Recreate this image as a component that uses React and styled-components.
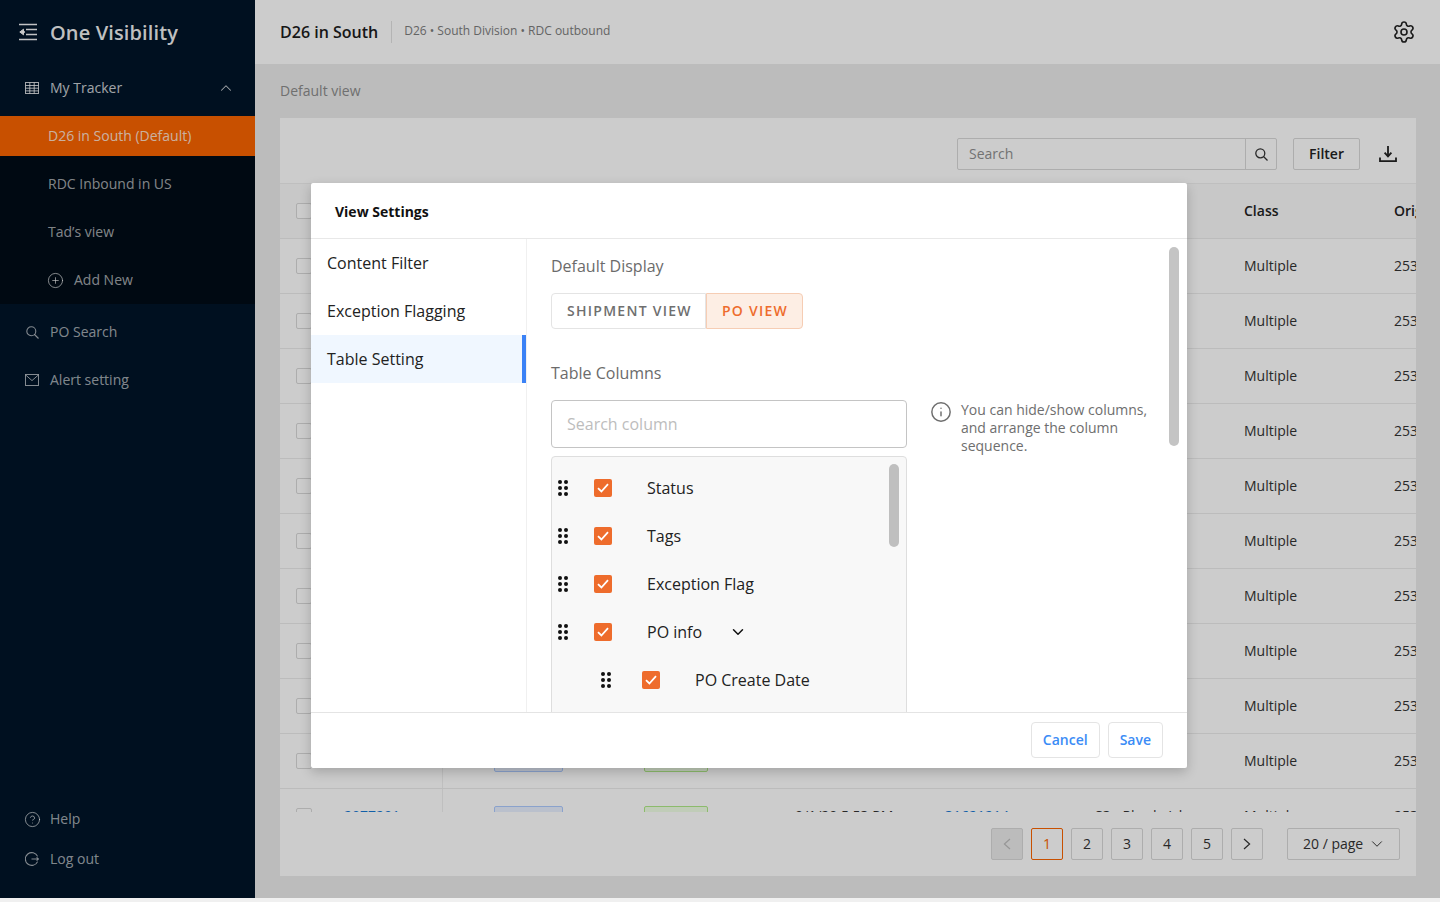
import React from "react";
import styled, { createGlobalStyle } from "styled-components";
import { CircleHelp, Settings, Info, ChevronUp, ChevronDown, CirclePlus } from "lucide-react";

const GlobalStyle = createGlobalStyle`
  html, body { margin: 0; padding: 0; background: #f0f0f0; height: 100%; overflow: hidden; }
  * { box-sizing: border-box; }
  body { font-family: "Open Sans", "Liberation Sans", sans-serif; }
`;

const Page = styled.div`
  position: relative;
  display: flex;
  width: 1440px;
  height: 898px;
  overflow: hidden;
`;

const Sidebar = styled.aside`
  width: 255px;
  flex: none;
  display: flex;
  flex-direction: column;
  background: #001529;
  color: rgba(255, 255, 255, 0.65);
`;

const Brand = styled.div`
  height: 64px;
  display: flex;
  align-items: center;
  gap: 12px;
  padding-left: 18px;
  font-size: 20px;
  font-weight: 600;
  letter-spacing: 0.12px;
  color: rgba(255, 255, 255, 0.95);
`;

const NavRow = styled.div`
  height: 48px;
  display: flex;
  align-items: center;
  gap: 11px;
  padding: 0 20px 0 25px;
  font-size: 14px;
  color: ${(p) => (p.$bright ? "rgba(255,255,255,.8)" : "inherit")};
`;

const NavIcon = styled.span`
  width: ${(p) => p.$w || 14}px;
  flex: none;
  display: flex;
  justify-content: center;
  svg { flex: none; }
`;

const NavLabel = styled.span`
  padding-bottom: 2px;
`;

const RowEnd = styled.span`
  margin-left: auto;
  display: flex;
`;

const SubMenu = styled.div`
  margin: 4px 0;
  background: #000c17;
  padding-bottom: 4px;
`;

const SubItem = styled.div`
  height: 40px;
  margin-bottom: 8px;
  display: flex;
  align-items: center;
  gap: 11px;
  padding-left: 48px;
  font-size: 14px;
  background: ${(p) => (p.$active ? "#fa6400" : "transparent")};
  color: ${(p) => (p.$active ? "rgba(255,255,255,.8)" : "inherit")};
  &:last-child { margin-bottom: 0; }
`;

const SidebarBottom = styled.div`
  margin-top: auto;
  padding-bottom: 19px;
  ${NavRow} { height: 40px; }
`;

const Main = styled.main`
  flex: 1;
  min-width: 0;
  display: flex;
  flex-direction: column;
  background: #ebebeb;
`;

const Header = styled.header`
  height: 64px;
  flex: none;
  display: flex;
  align-items: center;
  padding: 0 24px 0 25px;
  background: #fff;
`;

const PageTitle = styled.h1`
  margin: 0;
  font-size: 16px;
  font-weight: 600;
  color: #1c1c1c;
`;

const Crumbs = styled.div`
  margin-left: 13px;
  padding: 0 0 2px 12px;
  border-left: 1px solid #e2e2e2;
  font-size: 12px;
  line-height: 20px;
  color: #7d7d7d;
`;

const HeaderIcon = styled.span`
  margin-left: auto;
  display: flex;
  color: #222;
`;

const ViewLabel = styled.div`
  height: 54px;
  flex: none;
  padding: 16px 25px 0;
  font-size: 14px;
  line-height: 22px;
  color: #8c8c8c;
`;

const Panel = styled.section`
  margin: 0 24px 22px 25px;
  flex: 1;
  min-height: 0;
  display: flex;
  flex-direction: column;
  background: #fff;
`;

const Toolbar = styled.div`
  height: 66px;
  flex: none;
  display: flex;
  align-items: flex-start;
  justify-content: flex-end;
  padding: 20px 19px 0 0;
  border-bottom: 1px solid #efefef;
`;

const SearchBox = styled.div`
  width: 320px;
  height: 32px;
  display: flex;
  border: 1px solid #d9d9d9;
  border-radius: 2px;
`;

const SearchText = styled.div`
  flex: 1;
  padding-left: 11px;
  font-size: 14px;
  line-height: 30px;
  color: #8f8f8f;
`;

const SearchAddon = styled.div`
  width: 31px;
  display: flex;
  align-items: center;
  justify-content: center;
  border-left: 1px solid #d9d9d9;
  color: #333;
`;

const FilterButton = styled.div`
  width: 67px;
  height: 32px;
  margin-left: 16px;
  border: 1px solid #d9d9d9;
  border-radius: 2px;
  text-align: center;
  font-size: 14px;
  font-weight: 600;
  line-height: 30px;
  color: #222;
`;

const DownloadIcon = styled.span`
  margin-left: 19px;
  display: flex;
  align-items: center;
  height: 32px;
  color: #222;
`;

const TableWrap = styled.div`
  height: 628px;
  flex: none;
  overflow: hidden;
`;

const Row = styled.div`
  display: grid;
  grid-template-columns: 64px 99px 201px 151px 150px 150px 149px 150px 22px;
  height: 55px;
  align-items: stretch;
  border-bottom: 1px solid #ececec;
  background: ${(p) => (p.$head ? "#fafafa" : "#fff")};
  font-size: 14px;
  font-weight: ${(p) => (p.$head ? 600 : 400)};
  color: ${(p) => (p.$head ? "#222" : "#333")};
`;

const Cell = styled.div`
  display: flex;
  align-items: center;
  padding-bottom: 2px;
  white-space: nowrap;
  overflow: hidden;
  color: ${(p) => (p.$link ? "#1677d2" : "inherit")};
`;

const CheckCell = styled(Cell)`
  padding: 0 0 0 16px;
`;

const IdCell = styled(Cell)`
  border-right: 1px solid #efefef;
  color: #1677d2;
`;

const TagCell = styled(Cell)`
  padding: 0 0 0 ${(p) => p.$pad || 0}px;
`;

const HeadLabel = styled(Cell)`
  padding-left: ${(p) => p.$pad || 0}px;
`;

const RowBox = styled.span`
  width: 16px;
  height: 16px;
  border: 1px solid #d9d9d9;
  border-radius: 2px;
  background: #fff;
`;

const Tag = styled.span`
  height: 21px;
  width: ${(p) => p.$w}px;
  border: 1px solid ${(p) => p.$line};
  border-radius: 2px;
  background: ${(p) => p.$fill};
`;

const Pagination = styled.nav`
  flex: 1;
  display: flex;
  justify-content: flex-end;
  align-items: flex-start;
  gap: 8px;
  padding: 16px 16px 0 0;
`;

const PageBtn = styled.div`
  width: 32px;
  height: 32px;
  display: flex;
  align-items: center;
  justify-content: center;
  padding-bottom: 1px;
  border: 1px solid ${(p) => (p.$active ? "#fa6400" : "#d9d9d9")};
  border-radius: 2px;
  background: ${(p) => (p.$disabled ? "#ebebeb" : "transparent")};
  color: ${(p) => (p.$active ? "#fa6400" : p.$disabled ? "#bdbdbd" : "#333")};
  font-size: 14px;
`;

const PageSize = styled.div`
  width: 113px;
  height: 32px;
  margin-left: 16px;
  display: flex;
  align-items: center;
  gap: 5px;
  padding: 0 0 1px 15px;
  border: 1px solid #d9d9d9;
  border-radius: 2px;
  font-size: 14px;
  color: #333;
`;

const Overlay = styled.div`
  position: absolute;
  inset: 0;
  background: rgba(0, 0, 0, 0.2);
`;

const Modal = styled.div`
  position: absolute;
  left: 311px;
  top: 183px;
  width: 876px;
  height: 585px;
  display: flex;
  flex-direction: column;
  background: #fff;
  border-radius: 2px;
  box-shadow: 0 4px 12px rgba(0, 0, 0, 0.2);
`;

const ModalTitle = styled.div`
  height: 56px;
  flex: none;
  display: flex;
  align-items: center;
  padding: 1px 24px 0;
  border-bottom: 1px solid #e8e8e8;
  font-size: 14px;
  font-weight: 700;
  color: #111;
`;

const ModalBody = styled.div`
  flex: 1;
  min-height: 0;
  display: flex;
`;

const Tabs = styled.div`
  width: 216px;
  flex: none;
  border-right: 1px solid #f0f0f0;
`;

const TabItem = styled.div`
  height: 48px;
  width: 215px;
  padding-left: 16px;
  font-size: 16px;
  line-height: 48px;
  color: #222;
  background: ${(p) => (p.$active ? "#f0f7ff" : "transparent")};
  border-right: 4px solid ${(p) => (p.$active ? "#3b82f6" : "transparent")};
`;

const Content = styled.div`
  position: relative;
  flex: 1;
  overflow: hidden;
  padding: 16px 0 0 24px;
`;

const SectionLabel = styled.div`
  font-size: 16px;
  line-height: 22px;
  color: #6b6b6b;
`;

const Toggle = styled.div`
  display: flex;
  margin: 16px 0 33px;
`;

const ToggleBtn = styled.div`
  height: 36px;
  padding: 0 ${(p) => (p.$on ? 14 : 13)}px 0 15px;
  font-size: 14px;
  font-weight: 600;
  letter-spacing: 1.27px;
  line-height: 34px;
  border: 1px solid ${(p) => (p.$on ? "#f6cdb4" : "#e4e4e4")};
  border-radius: ${(p) => (p.$on ? "0 4px 4px 0" : "4px 0 0 4px")};
  background: ${(p) => (p.$on ? "#fdeee4" : "#fff")};
  color: ${(p) => (p.$on ? "#ee6c2c" : "#6f6f6f")};
`;

const ColumnsLayout = styled.div`
  display: flex;
  margin-top: 16px;
`;

const ColumnsLeft = styled.div`
  width: 356px;
  flex: none;
`;

const ColumnSearch = styled.div`
  height: 48px;
  padding-left: 15px;
  border: 1px solid #c4c4c4;
  border-radius: 4px;
  font-size: 16px;
  line-height: 46px;
  color: #bdbdbd;
`;

const ColumnList = styled.div`
  position: relative;
  height: 420px;
  margin-top: 8px;
  padding-top: 7px;
  background: #f8f8f8;
  border: 1px solid #dedede;
  border-radius: 4px;
`;

const ColumnRow = styled.div`
  height: 48px;
  display: flex;
  align-items: center;
  padding-left: ${(p) => (p.$nested ? 49 : 6)}px;
  font-size: 16px;
  color: #222;
`;

const Grip = styled.span`
  display: grid;
  grid-template-columns: 4px 4px;
  gap: 2px;
  margin-right: ${(p) => (p.$nested ? 31 : 26)}px;
  i {
    width: 4px;
    height: 4px;
    border-radius: 50%;
    background: #111;
  }
`;

const Check = styled.span`
  width: 18px;
  height: 18px;
  flex: none;
  display: flex;
  align-items: center;
  justify-content: center;
  margin-right: 35px;
  border-radius: 2px;
  background: #ee6c2c;
`;

const Expand = styled.span`
  display: flex;
  margin-left: 27px;
  color: #111;
`;

const Hint = styled.div`
  display: flex;
  gap: 9px;
  margin-left: 23px;
  width: 225px;
  color: #6e6e6e;
  font-size: 14px;
  line-height: 18px;
  svg { flex: none; margin-top: 1px; }
`;

const HintText = styled.div`
  padding-top: 1px;
  white-space: nowrap;
`;

const Thumb = styled.div`
  position: absolute;
  width: 10px;
  border-radius: 5px;
  background: ${(p) => p.$color};
  top: ${(p) => p.$top}px;
  right: ${(p) => p.$right}px;
  height: ${(p) => p.$h}px;
`;

const ModalFooter = styled.div`
  height: 56px;
  flex: none;
  display: flex;
  justify-content: flex-end;
  gap: 8px;
  padding: 9px 24px 0 0;
  border-top: 1px solid #e4e4e4;
`;

const FooterBtn = styled.div`
  height: 36px;
  padding: 0 11px;
  border: 1px solid #e4e4e4;
  border-radius: 4px;
  font-size: 14px;
  font-weight: 600;
  line-height: 34px;
  color: #3b8cf6;
`;

const MenuLogo = () => (
  <svg width="20" height="18" viewBox="0 0 20 18" fill="none" stroke="currentColor" strokeWidth="1.6">
    <path d="M1 1.5h18M8 6.5h11M8 11.5h11M1 16.5h18" />
    <path d="M5.5 6.2L1.8 9l3.7 2.8z" fill="currentColor" strokeWidth="1" />
    <path d="M4 9h3" />
  </svg>
);

const GridIcon = () => (
  <svg width="14" height="12" viewBox="0 0 14 12" fill="none" stroke="currentColor" strokeWidth="1">
    <rect x="0.5" y="0.5" width="13" height="11" />
    <path d="M0.5 3.5h13M0.5 6.2h13M0.5 8.9h13M4.8 0.5v11M9.2 0.5v11" />
  </svg>
);

const MailIcon = () => (
  <svg width="14" height="12" viewBox="0 0 14 12" fill="none" stroke="currentColor" strokeWidth="1">
    <rect x="0.5" y="0.5" width="13" height="11" />
    <path d="M0.7 1L7 6.6 13.3 1" />
  </svg>
);

const SearchGlyph = ({ weight }) => (
  <svg width="13" height="13" viewBox="0 0 13 13" fill="none" stroke="currentColor" strokeWidth={weight}>
    <circle cx="5.3" cy="5.3" r="4.5" />
    <path d="M8.5 8.5l4 4" />
  </svg>
);

const LogoutIcon = () => (
  <svg width="14" height="14" viewBox="0 0 14 14" fill="none" stroke="currentColor" strokeWidth="1.1">
    <path d="M12.6 4.4A6.4 6.4 0 1 0 12.6 9.6" />
    <path d="M6.5 7h7M11.6 5.4L13.4 7l-1.8 1.6" />
  </svg>
);

const DownloadGlyph = () => (
  <svg width="18" height="18" viewBox="0 0 18 18" fill="none" stroke="currentColor" strokeWidth="1.8">
    <path d="M9 1v10" />
    <path d="M5.6 7.6L9 11.4l3.4-3.8" />
    <path d="M1 12.5v3.6h16v-3.6" />
  </svg>
);

const PagerArrow = ({ left }) => (
  <svg width="8" height="12" viewBox="0 0 8 12" fill="none" stroke="currentColor" strokeWidth="1.2">
    <path d={left ? "M7 1L1.4 6 7 11" : "M1 1l5.6 5L1 11"} />
  </svg>
);

const Tick = () => (
  <svg width="12" height="10" viewBox="0 0 12 10" fill="none" stroke="#fff" strokeWidth="1.8">
    <path d="M1 5.2l3.4 3.3L11 1.2" />
  </svg>
);

const rows = [
  ["2077281", "9/1/20 5:53 PM", "31621214", "S3 - Rhode Isl"],
  ["2077282", "9/1/20 5:53 PM", "31621215", "S3 - Rhode Isl"],
  ["2077283", "9/1/20 5:53 PM", "31621216", "S3 - Rhode Isl"],
  ["2077284", "9/1/20 5:53 PM", "31621217", "S3 - Rhode Isl"],
  ["2077285", "9/1/20 5:53 PM", "31621218", "S3 - Rhode Isl"],
  ["2077286", "9/1/20 5:53 PM", "31621219", "S3 - Rhode Isl"],
  ["2077287", "9/1/20 5:53 PM", "31621220", "S3 - Rhode Isl"],
  ["2077288", "9/1/20 5:53 PM", "31621221", "S3 - Rhode Isl"],
  ["2077289", "9/1/20 5:53 PM", "31621222", "S3 - Rhode Isl"],
  ["2077290", "9/1/20 5:53 PM", "31621223", "S3 - Rhode Isl"],
  ["2077291", "9/1/20 5:53 PM", "31621214", "S3 - Rhode Isl"],
];

const columns = [
  { label: "Status" },
  { label: "Tags" },
  { label: "Exception Flag" },
  { label: "PO info", expand: true },
  { label: "PO Create Date", nested: true },
  { label: "PO Number", nested: true },
];

const GripDots = ({ nested }) => (
  <Grip $nested={nested}>
    {[0, 1, 2, 3, 4, 5].map((i) => (
      <i key={i} />
    ))}
  </Grip>
);

export default function App() {
  return (
    <Page>
      <GlobalStyle />
      <Sidebar>
        <Brand>
          <MenuLogo />
          One Visibility
        </Brand>
        <NavRow $bright>
          <NavIcon>
            <GridIcon />
          </NavIcon>
          <NavLabel>My Tracker</NavLabel>
          <RowEnd>
            <ChevronUp size={18} strokeWidth={1.4} />
          </RowEnd>
        </NavRow>
        <SubMenu>
          <SubItem $active>
            <NavLabel>D26 in South (Default)</NavLabel>
          </SubItem>
          <SubItem>
            <NavLabel>RDC Inbound in US</NavLabel>
          </SubItem>
          <SubItem>
            <NavLabel>Tad’s view</NavLabel>
          </SubItem>
          <SubItem>
            <NavIcon $w={15}>
              <CirclePlus size={17} strokeWidth={1.4} />
            </NavIcon>
            <NavLabel>Add New</NavLabel>
          </SubItem>
        </SubMenu>
        <NavRow>
          <NavIcon>
            <SearchGlyph weight={1.1} />
          </NavIcon>
          <NavLabel>PO Search</NavLabel>
        </NavRow>
        <NavRow>
          <NavIcon>
            <MailIcon />
          </NavIcon>
          <NavLabel>Alert setting</NavLabel>
        </NavRow>
        <SidebarBottom>
          <NavRow>
            <NavIcon>
              <CircleHelp size={17} strokeWidth={1.4} />
            </NavIcon>
            <NavLabel>Help</NavLabel>
          </NavRow>
          <NavRow>
            <NavIcon>
              <LogoutIcon />
            </NavIcon>
            <NavLabel>Log out</NavLabel>
          </NavRow>
        </SidebarBottom>
      </Sidebar>

      <Main>
        <Header>
          <PageTitle>D26 in South</PageTitle>
          <Crumbs>D26 • South Division • RDC outbound</Crumbs>
          <HeaderIcon>
            <Settings size={24} strokeWidth={1.6} />
          </HeaderIcon>
        </Header>
        <ViewLabel>Default view</ViewLabel>
        <Panel>
          <Toolbar>
            <SearchBox>
              <SearchText>Search</SearchText>
              <SearchAddon>
                <SearchGlyph weight={1.3} />
              </SearchAddon>
            </SearchBox>
            <FilterButton>Filter</FilterButton>
            <DownloadIcon>
              <DownloadGlyph />
            </DownloadIcon>
          </Toolbar>
          <TableWrap>
            <Row $head>
              <CheckCell>
                <RowBox />
              </CheckCell>
              <Cell>PO</Cell>
              <HeadLabel $pad={52}>Status</HeadLabel>
              <Cell>Tags</Cell>
              <Cell>Date</Cell>
              <Cell>Shipment</Cell>
              <Cell>Vendor</Cell>
              <Cell>Class</Cell>
              <Cell>Origin</Cell>
            </Row>
            {rows.map((r) => (
              <Row key={r[0]}>
                <CheckCell>
                  <RowBox />
                </CheckCell>
                <IdCell>{r[0]}</IdCell>
                <TagCell $pad={51}>
                  <Tag $w={69} $line="#adcbff" $fill="#e9f0ff" />
                </TagCell>
                <TagCell>
                  <Tag $w={64} $line="#b0ea87" $fill="#f0ffe6" />
                </TagCell>
                <Cell>{r[1]}</Cell>
                <Cell $link>{r[2]}</Cell>
                <Cell>{r[3]}</Cell>
                <Cell>Multiple</Cell>
                <Cell>2530</Cell>
              </Row>
            ))}
          </TableWrap>
          <Pagination>
            <PageBtn $disabled>
              <PagerArrow left />
            </PageBtn>
            <PageBtn $active>1</PageBtn>
            <PageBtn>2</PageBtn>
            <PageBtn>3</PageBtn>
            <PageBtn>4</PageBtn>
            <PageBtn>5</PageBtn>
            <PageBtn>
              <PagerArrow />
            </PageBtn>
            <PageSize>
              20 / page
              <ChevronDown size={18} strokeWidth={1.3} />
            </PageSize>
          </Pagination>
        </Panel>
      </Main>

      <Overlay />

      <Modal>
        <ModalTitle>View Settings</ModalTitle>
        <ModalBody>
          <Tabs>
            <TabItem>Content Filter</TabItem>
            <TabItem>Exception Flagging</TabItem>
            <TabItem $active>Table Setting</TabItem>
          </Tabs>
          <Content>
            <SectionLabel>Default Display</SectionLabel>
            <Toggle>
              <ToggleBtn>SHIPMENT VIEW</ToggleBtn>
              <ToggleBtn $on>PO VIEW</ToggleBtn>
            </Toggle>
            <SectionLabel>Table Columns</SectionLabel>
            <ColumnsLayout>
              <ColumnsLeft>
                <ColumnSearch>Search column</ColumnSearch>
                <ColumnList>
                  {columns.map((c) => (
                    <ColumnRow key={c.label} $nested={c.nested}>
                      <GripDots nested={c.nested} />
                      <Check>
                        <Tick />
                      </Check>
                      {c.label}
                      {c.expand && (
                        <Expand>
                          <ChevronDown size={18} strokeWidth={2} />
                        </Expand>
                      )}
                    </ColumnRow>
                  ))}
                  <Thumb $color="#bfbfbf" $top={7} $right={7} $h={83} />
                </ColumnList>
              </ColumnsLeft>
              <Hint>
                <Info size={22} strokeWidth={1.6} />
                <HintText>
                  You can hide/show columns,
                  <br />
                  and arrange the column
                  <br />
                  sequence.
                </HintText>
              </Hint>
            </ColumnsLayout>
            <Thumb $color="#c4c4c4" $top={8} $right={8} $h={199} />
          </Content>
        </ModalBody>
        <ModalFooter>
          <FooterBtn>Cancel</FooterBtn>
          <FooterBtn>Save</FooterBtn>
        </ModalFooter>
      </Modal>
    </Page>
  );
}
